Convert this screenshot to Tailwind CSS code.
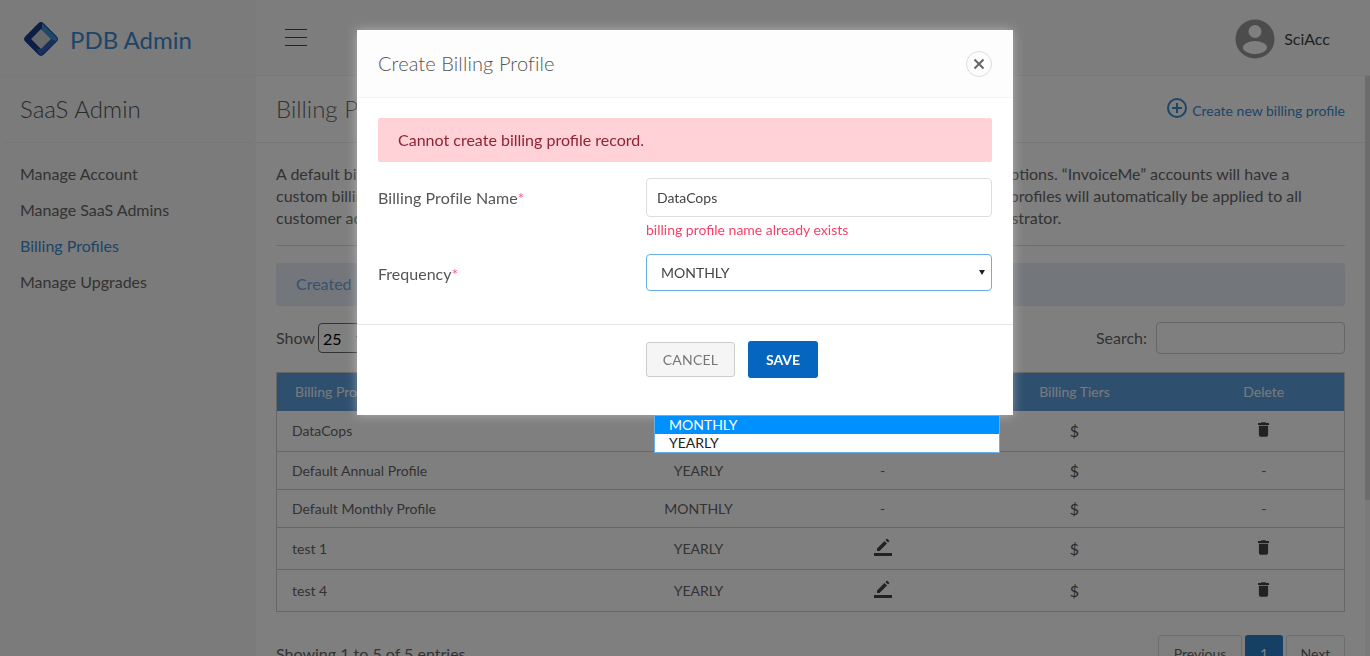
<!DOCTYPE html>
<html lang="en">

<head>
  <meta charset="UTF-8" />
  <meta name="viewport" content="width=device-width, initial-scale=1">
  <title>PDB Admin - Billing Profiles</title>
  <script src="https://cdn.jsdelivr.net/npm/@tailwindcss/browser@4"></script>
</head>

<body class="h-screen overflow-hidden bg-white font-['Lato',sans-serif] text-[16px] text-[#666]">

  <!-- top bar -->
  <header class="flex h-[76px] border-b border-[#f0f0f0] bg-[#fafafa]">
    <div class="flex w-[256px] items-center gap-[10px] pl-[22px] pt-[3px] bg-[#f6f6f6]">
      <svg width="38" height="38" viewBox="0 0 38 38">
        <rect x="6" y="6" width="26" height="26" rx="4" transform="rotate(45 19 19)" fill="#1c3a8c" />
        <path d="M20 3 L34 17 Q36 19 34 21 L29 26 L29 19 L20 10 Z" fill="#3b93d6" />
        <path d="M29 19 L34 21 L21 34 Q19 36 17 34 L14 29 L19 29 Z" fill="#2a62b8" />
        <rect x="12" y="12" width="14" height="14" transform="rotate(45 19 19)" fill="#cfd3d6" />
      </svg>
      <span class="mt-[2px] text-[24px] leading-none text-[#3a8ad0]">PDB Admin</span>
    </div>
    <div class="flex flex-1 items-center justify-between pl-[29px] pr-[40px]">
      <div class="flex w-[22px] flex-col gap-[6.5px]">
        <span class="h-[1.5px] bg-[#444]"></span>
        <span class="h-[1.5px] bg-[#444]"></span>
        <span class="h-[1.5px] bg-[#444]"></span>
      </div>
      <div class="flex items-center gap-[9px] pt-[3px]">
        <svg width="40" height="40" viewBox="0 0 40 40">
          <circle cx="20" cy="20" r="19.5" fill="#989898" />
          <circle cx="20" cy="12.5" r="6.5" fill="#ffffff" />
          <ellipse cx="20" cy="28.5" rx="12" ry="6.5" fill="#ffffff" />
        </svg>
        <span class="text-[#444]">SciAcc</span>
      </div>
    </div>
  </header>

  <div class="flex h-[580px]">
    <!-- sidebar -->
    <aside class="w-[256px] bg-[#f6f6f6]">
      <div class="mx-[4px] flex h-[67px] items-center border-b border-[#ececec] pl-[16px] text-[24px] font-light text-[#555]">SaaS Admin</div>
      <nav class="flex flex-col gap-[16px] pl-[20px] pt-[21px] leading-[20px]">
        <a href="#">Manage Account</a>
        <a href="#">Manage SaaS Admins</a>
        <a href="#" class="text-[#3a8ad0]">Billing Profiles</a>
        <a href="#">Manage Upgrades</a>
      </nav>
    </aside>

    <!-- main content -->
    <main class="flex-1 overflow-hidden">
      <div class="flex">
        <div class="flex-1 overflow-hidden">
          <div class="flex h-[67px] items-center justify-between border-b border-[#ececec] pl-[20px] pr-[20px]">
            <h1 class="mt-[-1px] text-[24px] font-light text-[#666]">Billing Profiles</h1>
            <a href="#" class="flex items-center gap-[5px] pt-[2px] text-[14px] text-[#3a8ad0]">
              <svg class="mt-[-5px]" width="20" height="20" viewBox="0 0 20 20" fill="none" stroke="#3a8ad0" stroke-width="2">
                <circle cx="10" cy="10" r="9" />
                <path d="M10 5 V15 M5 10 H15" />
              </svg>
              Create new billing profile
            </a>
          </div>

          <div class="pl-[20px] pr-[20px]">
            <div class="border-b border-[#dcdcdc] pb-[16px] pt-[20px] leading-[22px] whitespace-nowrap">
              <p>A default billing profile is used to charge customers for all of their new and recently renewed SaaS subscriptions. “InvoiceMe” accounts will have a</p>
              <p>custom billing profile set up by the administrator on requests, and when approved all of these new billing profiles will automatically be applied to all</p>
              <p>customer accounts which are created after that new date by a registered and fully authorised SaaS administrator.</p>
            </div>

            <div class="mt-[17px] flex h-[43px] items-center rounded-[3px] bg-[#e6eff7] pb-[2px] pl-[20px] text-[#6ea3dc]">Created Billing Profiles</div>

            <div class="mt-[16px] flex h-[32px] items-center justify-between">
              <div class="flex items-center gap-[3px]">
                Show
                <select class="h-[30px] w-[52px] rounded-[4px] border border-[#666] bg-white text-[16px] text-black">
                  <option>25</option>
                </select>
                entries
              </div>
              <div class="flex items-center gap-[9px]">
                Search:
                <input type="text" class="h-[32px] w-[189px] rounded-[4px] border border-[#ccc] bg-white" />
              </div>
            </div>

            <table class="mt-[18px] w-[1068px] table-fixed border-collapse border border-[#ccc] text-[14px]">
              <colgroup>
                <col class="w-[321px]" />
                <col class="w-[202px]" />
                <col class="w-[166px]" />
                <col class="w-[218px]" />
                <col class="w-[161px]" />
              </colgroup>
              <thead class="bg-[#5f9fdd] font-normal text-white/90">
                <tr class="h-[38px]">
                  <th class="pl-[18px] text-left font-normal">Billing Profile Name</th>
                  <th class="font-normal">Frequency</th>
                  <th class="font-normal">Edit</th>
                  <th class="font-normal">Billing Tiers</th>
                  <th class="font-normal">Delete</th>
                </tr>
              </thead>
              <tbody>
                <tr class="h-[41px] border-b border-[#ccc]">
                  <td class="pl-[15px]">DataCops</td>
                  <td class="text-center">MONTHLY</td>
                  <td class="text-center"><svg class="mx-auto" width="18" height="18" viewBox="0 0 18 18"><path fill="#444" d="M2 12.5 L2 15 H4.5 L12 7.5 L9.5 5 Z M13 6.5 L14.5 5 L12 2.5 L10.5 4 Z" /></svg></td>
                  <td class="text-center text-[16px] text-[#555]">$</td>
                  <td class="text-center">
                    <svg class="mx-auto mt-[-3px]" width="11" height="15" viewBox="0 0 12 16"><path fill="#444" d="M4 0 H8 L9 1 H12 V3 H0 V1 H3 Z M1 4 H11 V14 Q11 16 9 16 H3 Q1 16 1 14 Z" /></svg>
                  </td>
                </tr>
                <tr class="h-[38px] border-b border-[#ccc]">
                  <td class="pl-[15px]">Default Annual Profile</td>
                  <td class="text-center">YEARLY</td>
                  <td class="text-center">-</td>
                  <td class="text-center text-[16px] text-[#555]">$</td>
                  <td class="text-center">-</td>
                </tr>
                <tr class="h-[38px] border-b border-[#ccc]">
                  <td class="pl-[15px]">Default Monthly Profile</td>
                  <td class="text-center">MONTHLY</td>
                  <td class="text-center">-</td>
                  <td class="text-center text-[16px] text-[#555]">$</td>
                  <td class="text-center">-</td>
                </tr>
                <tr class="h-[42px] border-b border-[#ccc]">
                  <td class="pl-[15px]">test 1</td>
                  <td class="text-center">YEARLY</td>
                  <td class="text-center">
                    <svg class="mx-auto mt-[-4px]" width="18" height="18" viewBox="0 0 18 18"><path fill="#444" d="M0 15 H18 V18 H0 Z M3 10.5 L3 13 H5.5 L13 5.5 L10.5 3 Z M14 4.5 L15.5 3 L13 0.5 L11.5 2 Z" /></svg>
                  </td>
                  <td class="text-center text-[16px] text-[#555]">$</td>
                  <td class="text-center">
                    <svg class="mx-auto mt-[-3px]" width="11" height="15" viewBox="0 0 12 16"><path fill="#444" d="M4 0 H8 L9 1 H12 V3 H0 V1 H3 Z M1 4 H11 V14 Q11 16 9 16 H3 Q1 16 1 14 Z" /></svg>
                  </td>
                </tr>
                <tr class="h-[42px] border-b border-[#ccc]">
                  <td class="pl-[15px]">test 4</td>
                  <td class="text-center">YEARLY</td>
                  <td class="text-center">
                    <svg class="mx-auto mt-[-4px]" width="18" height="18" viewBox="0 0 18 18"><path fill="#444" d="M0 15 H18 V18 H0 Z M3 10.5 L3 13 H5.5 L13 5.5 L10.5 3 Z M14 4.5 L15.5 3 L13 0.5 L11.5 2 Z" /></svg>
                  </td>
                  <td class="text-center text-[16px] text-[#555]">$</td>
                  <td class="text-center">
                    <svg class="mx-auto mt-[-3px]" width="11" height="15" viewBox="0 0 12 16"><path fill="#444" d="M4 0 H8 L9 1 H12 V3 H0 V1 H3 Z M1 4 H11 V14 Q11 16 9 16 H3 Q1 16 1 14 Z" /></svg>
                  </td>
                </tr>
              </tbody>
            </table>

            <div class="mt-[23px] flex items-start justify-between">
              <span class="mt-[7px]">Showing 1 to 5 of 5 entries</span>
              <div class="flex gap-[3px] text-[14px]">
                <a href="#" class="flex h-[36px] w-[84px] items-center justify-center rounded-[3px] border border-[#ddd]">Previous</a>
                <a href="#" class="flex h-[36px] w-[38px] items-center justify-center rounded-[3px] bg-[#2a7fc9] text-white">1</a>
                <a href="#" class="flex h-[36px] w-[59px] items-center justify-center rounded-[3px] border border-[#ddd]">Next</a>
              </div>
            </div>
          </div>
        </div>
        <!-- scrollbar -->
        <div class="h-[580px] w-[5px] shrink-0 bg-[#f4f4f4]">
          <div class="h-[424px] bg-[#d8d8d8]"></div>
        </div>
      </div>
    </main>
  </div>

  <!-- backdrop -->
  <div class="fixed inset-0 bg-black/50"></div>

  <!-- modal -->
  <div class="fixed left-[357px] top-[30px] h-[385px] w-[656px] bg-white shadow-[0_0_10px_rgba(255,255,255,0.4)] text-[#555]">
    <div class="flex h-[68px] items-center justify-between border-b border-[#f5f5f5] bg-[#fdfdfd] pl-[21px] pr-[21px]">
      <h2 class="mt-[-2px] text-[20px] font-light tracking-[0.1px] text-[#555]">Create Billing Profile</h2>
      <button class="flex h-[26px] w-[26px] items-center justify-center rounded-full border border-[#ddd]">
        <svg width="12" height="12" viewBox="0 0 12 12" stroke="#666" stroke-width="2">
          <path d="M1.5 1.5 L10.5 10.5 M10.5 1.5 L1.5 10.5" />
        </svg>
      </button>
    </div>

    <div class="px-[21px] pt-[20px]">
      <div class="flex h-[44px] items-center rounded-[2px] bg-[#ffd2d7] pl-[20px] text-[#8f2435]">Cannot create billing profile record.</div>

      <div class="mt-[16px] flex">
        <label class="w-[268px] pt-[9px] leading-[22px] tracking-[0.1px]">Billing Profile Name<span class="text-[#ff5c80]">*</span></label>
        <div class="flex-1">
          <input type="text" value="DataCops" class="h-[39px] w-full rounded-[4px] border border-[#ddd] pl-[10px] text-[14px] text-[#444]" />
          <p class="mt-[3px] mb-[1px] text-[14px] leading-[20px] text-[#fb3f68]">billing profile name already exists</p>
        </div>
      </div>

      <div class="mt-[13px] flex">
        <label class="w-[268px] pt-[9px] leading-[22px]">Frequency<span class="text-[#ff5c80]">*</span></label>
        <div class="relative flex-1">
          <select class="h-[37px] w-full appearance-none rounded-[4px] border border-[#66afe9] bg-white pl-[14px] text-[14px] text-[#444]">
            <option>MONTHLY</option>
            <option>YEARLY</option>
          </select>
          <svg class="absolute right-[7px] top-[16px]" width="6" height="5" viewBox="0 0 6 5"><path d="M0 0 H6 L3 5 Z" fill="#222" /></svg>
        </div>
      </div>
    </div>

    <div class="mt-[33px] flex gap-[13px] border-t border-[#e5e5e5] pl-[289px] pt-[16px]">
      <button class="mt-[1px] h-[35px] w-[89px] rounded-[3px] border border-[#ccc] bg-[#f5f5f5] text-[14px] tracking-[0.2px] text-[#777]">CANCEL</button>
      <button class="h-[37px] w-[70px] rounded-[3px] bg-[#0566c0] text-[14px] font-bold text-white">SAVE</button>
    </div>

    <!-- open select list -->
    <ul class="absolute left-[297px] top-[385px] w-[346px] border border-[#66afe9] bg-white text-[14px] leading-[18px] text-[#222]">
      <li class="bg-[#0090ff] pl-[14px] text-white">MONTHLY</li>
      <li class="pl-[14px]">YEARLY</li>
    </ul>
  </div>

</body>

</html>
